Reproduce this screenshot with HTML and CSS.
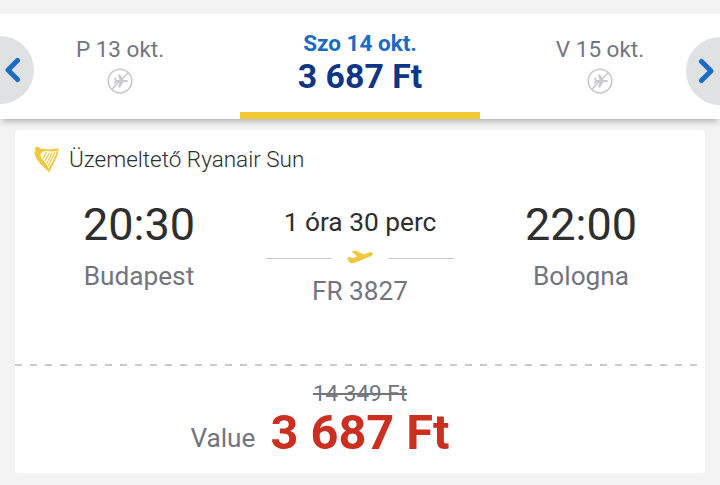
FILE: index.html
```html
<!DOCTYPE html>
<html lang="hu">
<head>
    <meta charset="UTF-8">
    <meta name="viewport" content="width=device-width, initial-scale=1.0">
    <title>Budapest - Bologna</title>
    <link rel="stylesheet" href="styles.css">
</head>
<body>
    <!-- Date carousel -->
    <nav class="carousel">
        <div class="date">
            <span class="date-label">P 13 okt.</span>
            <svg class="no-flight" viewBox="0 0 26 26">
                <circle cx="13" cy="13" r="11.8"/>
                <path d="M4.8 21.2 21.2 4.8"/>
                <path class="plane" d="M7 9.500h1.300l1.500 2.400h2.700L11 6.500h2.200l3.300 5.400h2.500c2.600.1 2.600 2.100 0 2.200h-2.500L13.200 19.500H11l1.500-5.400H9.800l-1.500 2.200H7l.8-3.400z"/>
            </svg>
        </div>
        <div class="date active">
            <span class="date-label">Szo 14 okt.</span>
            <span class="date-price">3 687 Ft</span>
        </div>
        <div class="date">
            <span class="date-label">V 15 okt.</span>
            <svg class="no-flight" viewBox="0 0 26 26">
                <circle cx="13" cy="13" r="11.8"/>
                <path d="M4.8 21.2 21.2 4.8"/>
                <path class="plane" d="M7 9.500h1.300l1.500 2.400h2.700L11 6.500h2.200l3.300 5.400h2.500c2.600.1 2.600 2.100 0 2.200h-2.500L13.200 19.500H11l1.500-5.400H9.800l-1.500 2.200H7l.8-3.400z"/>
            </svg>
        </div>
        <button class="arrow arrow-prev" aria-label="Előző">
            <svg viewBox="0 0 16 26"><path d="M12.5 3.5 3 13l9.5 9.5"/></svg>
        </button>
        <button class="arrow arrow-next" aria-label="Következő">
            <svg viewBox="0 0 16 26"><path d="M3.5 3.5 13 13l-9.5 9.5"/></svg>
        </button>
    </nav>

    <!-- Flight card -->
    <main class="card">
        <div class="operator">
            <svg class="harp" viewBox="0 0 26 27">
                <path class="frame" d="M.8 2.500C1.800.8 4 .3 5.400 1.300c.5.600.5 1.200.3 1.600 3-.5 5 .3 8 .5 4 .4 7-1.500 11.500-.7-1.200 2.200-4 2.900-7 2.700-4-.1-7-1-9.700.3C6 7.500 6.300 10 7.800 12.500c2.500 4 6.300 6.500 7.100 11V26.500C12.500 23 8.500 20.500 5.200 16.500 2.800 13.500.8 10 .4 6.200l1.600-1.700z"/>
                <path class="frame" d="M22.800 4.800h1.600C23.500 12 19 18 15.200 26.500l-.6-3C17.500 16 21.800 11.500 22.800 4.800z"/>
                <path class="strings" d="M12.500 6 9 12.500M15.500 6.500 11 15M18.200 6.500 12.800 17.500M20.800 6.500 14.300 20"/>
            </svg>
            <span>Üzemeltető Ryanair Sun</span>
        </div>

        <div class="flight">
            <div class="stop">
                <span class="time">20:30</span>
                <span class="city">Budapest</span>
            </div>
            <div class="route">
                <span class="duration">1 óra 30 perc</span>
                <div class="route-line">
                    <svg class="takeoff" viewBox="0 0 26 14">
                        <path d="M0 7.800 2.500 7l3.300 1.300 4.400-1.700L4.600 1.500 8.200.5l9 4L21.500 2.700c2.300-.9 4.400-.4 4.200 1.200-.2 1.400-1.500 2.100-2.800 2.700L9 12.300c-3 1.200-5.500 1.300-6.800-.3z"/>
                    </svg>
                </div>
                <span class="number">FR 3827</span>
            </div>
            <div class="stop">
                <span class="time">22:00</span>
                <span class="city">Bologna</span>
            </div>
        </div>

        <div class="fare">
            <span class="old-price">14 349 Ft</span>
            <div class="fare-row">
                <span class="fare-name">Value</span>
                <span class="new-price">3 687 Ft</span>
            </div>
        </div>
    </main>
</body>
</html>
```
FILE: styles.css
```css
* {
    box-sizing: border-box;
}
body {
    margin: 0;
    padding-top: 14px;
    height: 485px;
    overflow: hidden;
    background: #f3f3f3;
    font-family: Roboto, "Liberation Sans", sans-serif;
    color: #2e2e2e;
}

/* Date carousel */
.carousel {
    position: relative;
    display: grid;
    grid-template-columns: repeat(3, 240px);
    height: 105px;
    background: #fff;
    box-shadow: 0 5px 6px -2px rgba(0,0,0,0.25);
}
.date {
    display: flex;
    flex-direction: column;
    align-items: center;
    padding-top: 21px;
    color: #73757e;
}
.date-label {
    font-size: 22.5px;
    line-height: 28px;
}
.no-flight {
    width: 26px;
    height: 26px;
    margin-top: 5px;
    fill: none;
    stroke: #c8cace;
    stroke-width: 1.6;
}
.no-flight .plane {
    fill: #c8cace;
    stroke: none;
}
.active {
    padding-top: 15px;
    border-bottom: 7px solid #f1c933;
    color: #1a6bc4;
    font-weight: bold;
}
.date-price {
    font-size: 33.8px;
    line-height: 40px;
    color: #0d3688;
}
.arrow {
    position: absolute;
    top: 23px;
    width: 68px;
    height: 68px;
    padding: 0;
    border: none;
    border-radius: 50%;
    background: #dfe1e3;
}
.arrow svg {
    display: block;
    width: 16px;
    height: 26px;
    fill: none;
    stroke: #1a6bc4;
    stroke-width: 5;
    stroke-linecap: round;
    stroke-linejoin: round;
}
.arrow-prev {
    top: 22px;
    left: -34px;
    padding-left: 39px;
}
.arrow-next {
    right: -34px;
    padding-left: 12px;
}

/* Flight card */
.card {
    margin: 11px 15px 0;
    height: 343px;
    border-radius: 4px;
    background: #fff;
}
.operator {
    display: flex;
    align-items: center;
    height: 58px;
    padding-left: 19px;
    gap: 9px;
    font-size: 22.5px;
    font-weight: 300;
}
.harp {
    width: 26px;
    height: 27px;
}
.harp .frame {
    fill: #efc83c;
}
.harp .strings {
    fill: none;
    stroke: #efc83c;
    stroke-width: 1.2;
}
.flight {
    display: grid;
    grid-template-columns: 217px 188px 217px;
    justify-content: center;
    height: 176px;
    padding-top: 10px;
}
.stop,
.route {
    display: flex;
    flex-direction: column;
    align-items: center;
}
.stop:first-child {
    padding-right: 37px;
}
.stop:last-child {
    padding-left: 37px;
}
.time {
    font-size: 45px;
    line-height: 54px;
}
.city,
.number,
.fare-name {
    font-size: 26.2px;
    color: #73757e;
}
.city {
    line-height: 48px;
}
.duration {
    font-size: 26.3px;
    line-height: 48px;
}
.route-line {
    display: flex;
    align-items: center;
    gap: 15px;
    width: 100%;
    height: 24px;
}
.route-line::before,
.route-line::after {
    content: "";
    flex: 1;
    height: 1px;
    background: #c8cacc;
}
.takeoff {
    width: 26px;
    height: 14px;
    margin-bottom: 3px;
    fill: #efc83c;
}
.number {
    line-height: 42px;
}

/* Fare */
.fare {
    display: flex;
    flex-direction: column;
    align-items: center;
    padding-top: 15px;
    background: repeating-linear-gradient(90deg, #c8caca 0 7px, transparent 7px 15px) top left / 100% 2px no-repeat;
}
.old-price {
    font-size: 22.5px;
    line-height: 28px;
    color: #73757e;
    text-decoration: line-through;
}
.fare-row {
    display: flex;
    align-items: flex-start;
    gap: 15px;
    margin-right: 80px;
}
.fare-name {
    line-height: 62px;
}
.new-price {
    font-size: 48.7px;
    line-height: 51px;
    font-weight: bold;
    color: #cc2e20;
}
```
